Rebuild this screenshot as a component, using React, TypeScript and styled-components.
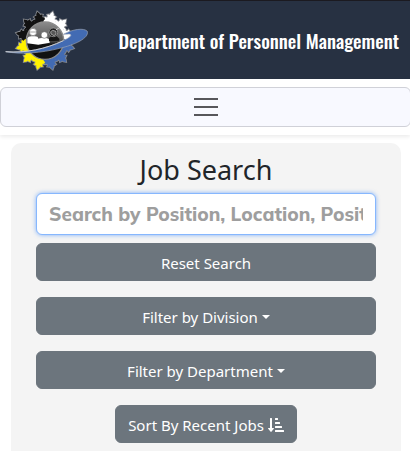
import React from "react";
import styled, { createGlobalStyle } from "styled-components";
import { FaSortAmountDownAlt } from "react-icons/fa";

const GlobalStyle = createGlobalStyle`
  *, *::before, *::after { box-sizing: border-box; }
  body {
    margin: 0;
    background: #fff;
    color: #212529;
    font-family: "Segoe UI", "Noto Sans", sans-serif;
    font-size: 15px;
    line-height: 24px;
    overflow-x: hidden;
  }
`;

const Header = styled.header`
  display: flex;
  align-items: center;
  justify-content: space-between;
  height: 79px;
  padding: 0 11px 0 0;
  background: #273142;
  border-top: 1px solid #1b1a20;
  box-shadow: 0 2px 4px rgba(0, 0, 0, 0.08);
`;

const LogoLink = styled.a`
  display: flex;
`;

const SiteTitle = styled.span`
  color: #fff;
  font-family: Oswald, "Liberation Sans Narrow", sans-serif;
  font-size: 19px;
  font-weight: 500;
  line-height: 32px;
  white-space: nowrap;
`;

const Nav = styled.nav`
  padding: 8px 0;
  background: #fff;
  box-shadow: 0 2px 4px rgba(0, 0, 0, 0.08);
`;

const MenuButton = styled.button`
  display: flex;
  align-items: center;
  justify-content: center;
  width: calc(100% + 1px);
  height: 40px;
  padding: 0;
  background: #f8f9ff;
  border: 1px solid #d0d1d8;
  border-radius: 6px;
`;

const Panel = styled.main`
  display: flex;
  flex-direction: column;
  align-items: center;
  margin: 8px 9px 0 11px;
  padding: 10px 25px 8px;
  background: #f4f4f4;
  border-radius: 10px 10px 0 0;
`;

const Heading = styled.h1`
  margin: 0 0 6px;
  font-size: 27px;
  font-weight: 400;
  line-height: 34px;
`;

const SearchInput = styled.input`
  width: 100%;
  height: 42px;
  margin-bottom: 8px;
  padding: 0 12px;
  background: #fff;
  border: 1px solid #86b7fe;
  border-radius: 6px;
  outline: 0;
  box-shadow: 0 0 4px rgba(13, 110, 253, 0.5);
  caret-color: #1668d8;
  font-family: Mulish, "Open Sans", sans-serif;
  font-size: 19px;
  font-weight: 800;
  &::placeholder { color: #9e9e9e; opacity: 1; }
`;

const ActionButton = styled.button<{ $fit?: boolean }>`
  display: flex;
  align-items: center;
  justify-content: center;
  gap: 4px;
  width: ${(p) => (p.$fit ? "auto" : "100%")};
  height: 38px;
  padding: 2px 12px 0;
  color: #fff;
  background: #6c757d;
  border: 1px solid #6c757d;
  border-radius: 6px;
  font: inherit;
  white-space: nowrap;
  & + & { margin-top: 16px; }
`;

const Caret = styled.span`
  border-top: 4px solid currentColor;
  border-left: 4px solid transparent;
  border-right: 4px solid transparent;
`;

const TEETH = [
  ["#111", [-15, -45, -75]],
  ["#fff", [15, 45, 75]],
  ["#fff200", [-105, -135, -165]],
  ["#426bb3", [105, 135, 165]],
] as const;

const TOOTH =
  "M-20-48L-19-58L-16-63L-21-66L-16-69L-12-68L-11-73L-14-77L-9-79L-6-78L-5-83L0-90L5-83L6-78L9-79L14-77L11-73L12-68L16-69L21-66L16-63L19-58L20-48Z";

function Logo() {
  return (
    <svg width="90" height="78" viewBox="0 0 270 234" role="img" aria-label="Department emblem">
      <defs>
        <linearGradient id="globe" x1="0" y1="0" x2="0" y2="1">
          <stop offset="0" stopColor="#8c8c8c" />
          <stop offset="0.5" stopColor="#555" />
          <stop offset="0.6" stopColor="#111" />
        </linearGradient>
      </defs>
      <g transform="translate(135 119)">
        {TEETH.map(([color, angles]) => (
          <g key={color} stroke="#85888e" strokeWidth="5">
            {angles.map((angle) => (
              <path key={angle} d={TOOTH} transform={`rotate(${angle})`} />
            ))}
          </g>
        ))}
        {TEETH.map(([color, angles]) => (
          <g key={color} fill={color}>
            {angles.map((angle) => (
              <path key={angle} d={TOOTH} transform={`rotate(${angle})`} />
            ))}
          </g>
        ))}
      </g>
      <circle cx="135" cy="119" r="56" fill="url(#globe)" stroke="#8b8b8b" strokeWidth="4" />
      <g fill="#fff">
        <path d="M82 127V112Q84 106 94 106H105Q114 106 115 113Q118 111 126 111H139Q146 112 149 118V125L115 131Z" />
        <circle cx="99" cy="93" r="11" stroke="#777" strokeWidth="2" />
        <path d="M90 93H109" stroke="#777" strokeWidth="2" />
        <circle cx="133" cy="102" r="10" stroke="#666" strokeWidth="2" />
      </g>
      <path d="M147 121V111L155 106H170L178 113V119Z" fill="#151515" />
      <circle cx="160" cy="94" r="13" fill="#1c1c1c" stroke="#aaa" strokeWidth="2" />
      <path d="M152 92L158 88L168 91V99L162 104L153 99Z" fill="#555" stroke="#ccc" strokeWidth="2" />
      <path d="M168 86L176 82" stroke="#fff" strokeWidth="2" />
      <path d="M17 152C76 157 137 144 190 119C209 110 220 101 207 99L190 100C218 84 253 80 262 91C268 112 222 132 179 142C123 156 65 161 17 152Z" fill="#426bb3" stroke="#9ba5b5" strokeWidth="2" />
      <path d="M17 152C76 157 137 144 190 119" fill="none" stroke="#c8cbd1" strokeWidth="3" />
    </svg>
  );
}

export default function App() {
  return (
    <>
      <GlobalStyle />
      <Header>
        <LogoLink href="#"><Logo /></LogoLink>
        <SiteTitle>Department of Personnel Management</SiteTitle>
      </Header>
      <Nav>
        <MenuButton type="button" aria-label="Toggle navigation">
          <svg width="30" height="30" viewBox="0 0 30 30" fill="none" stroke="#57575b" strokeWidth="2" aria-hidden="true">
            <path d="M3 7H27M3 15H27M3 23H27" />
          </svg>
        </MenuButton>
      </Nav>
      <Panel>
        <Heading>Job Search</Heading>
        <SearchInput type="text" autoFocus aria-label="Search jobs" placeholder="Search by Position, Location, Position Number" />
        <ActionButton type="button">Reset Search</ActionButton>
        <ActionButton type="button" aria-haspopup="true">Filter by Division<Caret /></ActionButton>
        <ActionButton type="button" aria-haspopup="true">Filter by Department<Caret /></ActionButton>
        <ActionButton type="button" $fit>Sort By Recent Jobs<FaSortAmountDownAlt size={16} /></ActionButton>
      </Panel>
    </>
  );
}
